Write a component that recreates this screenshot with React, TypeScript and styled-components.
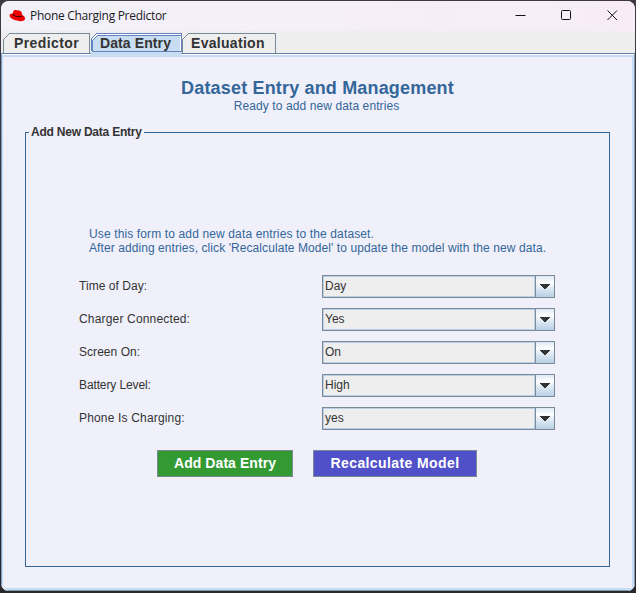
import React from "react";
import styled, { createGlobalStyle } from "styled-components";

const GlobalStyle = createGlobalStyle`
  * { box-sizing: border-box; }
  body { margin: 0; background: #29292d; }
`;

const Frame = styled.div`
  width: 636px;
  height: 593px;
  padding: 1px 1px 2px;
  background: linear-gradient(#3d3a42, #29292d);
  overflow: hidden;
`;

const Window = styled.div`
  display: flex;
  flex-direction: column;
  height: 590px;
  border-radius: 8px;
  overflow: hidden;
  background: #eeeeee;
  color: #333333;
  font: 12px/14px "Liberation Sans", Arial, sans-serif;
`;

const TitleBar = styled.header`
  display: flex;
  align-items: center;
  flex: none;
  height: 30px;
  padding-left: 8px;
  background: linear-gradient(90deg, #f2f1fa, #f8edf6);
`;

const WindowTitle = styled.span`
  flex: 1;
  margin-left: 4px;
  color: #1b1a1c;
  font: 12px/16px "Open Sans", "Noto Sans", sans-serif;
  letter-spacing: -0.29px;
`;

const WindowButton = styled.button`
  display: flex;
  align-items: center;
  justify-content: center;
  width: 46px;
  height: 30px;
  padding: 0 0 2px;
  border: 0;
  background: none;
`;

const TabBar = styled.nav`
  display: flex;
  flex: none;
  height: 22px;
  padding: 2px 0 0 2px;
  background: #eeeeee;
`;

const Tab = styled.button<{ $width: number; $tracking: number }>`
  position: relative;
  flex: none;
  width: ${(p) => p.$width}px;
  height: 20px;
  padding: 0;
  border: 0;
  background: none;
  color: #333333;
  font: bold 14px/20px "Liberation Sans", Arial, sans-serif;
  letter-spacing: ${(p) => p.$tracking}px;
  white-space: nowrap;
`;

const TabShape = styled.svg`
  position: absolute;
  left: 0;
  top: 0;
`;

const TabLabel = styled.span<{ $inset: number }>`
  position: absolute;
  left: ${(p) => p.$inset}px;
  top: 0;
`;

const TabPane = styled.main`
  position: relative;
  flex: 1;
  display: flex;
  flex-direction: column;
  border: solid;
  border-width: 1px;
  border-color: #6382a8 #7a99b2 #7a99b2 #7f9ccc;
  background: #f0f0fa;
  box-shadow: inset 0 1px #ffffff, inset 0 3px #c8ddf2, inset 1px 0 #c8ddf2, inset -2px 0 #c8ddf2,
    inset 0 -2px #c8ddf2;
  padding: 24px 24px 0 23px;
`;

const TabJoin = styled.div`
  position: absolute;
  left: 89px;
  top: -2px;
  width: 90px;
  height: 4px;
  background: #c8ddf2;
`;

const Heading = styled.h1`
  margin: 0;
  color: #336699;
  font: bold 18px/20px "Liberation Sans", Arial, sans-serif;
  letter-spacing: 0.17px;
  text-align: center;
`;

const Status = styled.p`
  margin: 1px 0 0;
  padding-right: 2px;
  color: #336699;
  letter-spacing: 0.1px;
  text-align: center;
`;

const Group = styled.fieldset`
  min-width: 0;
  width: 585px;
  height: 442px;
  margin: 12px 0 0;
  padding: 88px 53px 0;
  border: 1px solid #336699;
`;

const Legend = styled.legend`
  height: 14px;
  margin-left: -50px;
  padding: 0 2px;
  font: bold 12px/14px "Liberation Sans", Arial, sans-serif;
  letter-spacing: -0.22px;
`;

const Instructions = styled.div`
  padding-left: 10px;
  color: #336699;
`;

const Line = styled.p<{ $tracking: number }>`
  margin: 0;
  letter-spacing: ${(p) => p.$tracking}px;
  white-space: nowrap;
`;

const Form = styled.div`
  display: grid;
  gap: 10px;
  margin-top: 20px;
`;

const Row = styled.div`
  display: grid;
  grid-template-columns: 243px 233px;
  height: 23px;
`;

const Label = styled.label<{ $tracking: number }>`
  line-height: 22px;
  letter-spacing: ${(p) => p.$tracking}px;
`;

const Combo = styled.div`
  display: grid;
  grid-template-columns: 1fr 19px;
  border: 1px solid #7a8a99;
`;

const ComboValue = styled.span`
  padding-left: 1px;
  border: 1px solid #b8cfe5;
  background: #eeeeee;
  line-height: 18px;
`;

const ComboArrow = styled.span`
  display: flex;
  align-items: center;
  padding-left: 4px;
  border-left: 1px solid #7a8a99;
  background: linear-gradient(#dde8f3, #ffffff 30%, #dce8f3 60%, #b8cfe5);
`;

const Actions = styled.div`
  display: flex;
  gap: 20px;
  margin: 20px 0 0 78px;
`;

const ActionButton = styled.button<{ $width: number; $color: string; $tracking: number }>`
  width: ${(p) => p.$width}px;
  height: 27px;
  padding: 0;
  border: 1px solid #7a8a99;
  background: ${(p) => p.$color};
  color: #ffffff;
  font: bold 14px/25px "Liberation Sans", Arial, sans-serif;
  letter-spacing: ${(p) => p.$tracking}px;
  white-space: nowrap;
`;

const fields = [
  { label: "Time of Day:", value: "Day", tracking: 0.05 },
  { label: "Charger Connected:", value: "Yes", tracking: 0.17 },
  { label: "Screen On:", value: "On", tracking: 0.05 },
  { label: "Battery Level:", value: "High", tracking: -0.12 },
  { label: "Phone Is Charging:", value: "yes", tracking: 0.17 },
];

const tabs = [
  { label: "Predictor", width: 88, inset: 11, tracking: 0.4 },
  { label: "Data Entry", width: 91, inset: 9, tracking: 0.1 },
  { label: "Evaluation", width: 95, inset: 9, tracking: 0.3 },
];

function HatIcon() {
  return (
    <svg width="17" height="14" viewBox="0 0 17 14">
      <path d="M4.5 2C5.2.6 7 .9 8.2 1.4C10 1 12.3 1.8 12.8 4L13.2 6C15 7 16.6 8.6 15.9 10.2C15 12.3 11 12.7 8 11.6C4.8 10.9 1 9.1.5 6.7C.4 5.1 2 4.6 3.6 4.8Z" fill="#ee0000" />
      <path d="M3.7 4.2C5 6.5 10 8.7 13.1 6.4L13.2 7.2C10.3 9.6 4.3 7.6 3.6 5.1Z" fill="#170606" />
    </svg>
  );
}

function TabOutline({ width, selected }: { width: number; selected: boolean }) {
  const edge = width - 0.5;
  return selected ? (
    <TabShape width={width} height="21" shapeRendering="crispEdges">
      <path d={`M0 20V6L6 0H${width}V20Z`} fill="#ffffff" />
      <path d={`M2 18V7L7 2H${width - 2}V18Z`} fill="#c8ddf2" />
      <path d={`M.5 18V5.5L5.5 .5H${edge}V19M.5 18.5H${edge}M${edge} 2.5H6.5L1.5 7.5V18`} fill="none" stroke="#6382bf" />
    </TabShape>
  ) : (
    <TabShape width={width} height="21" shapeRendering="crispEdges">
      <path d={`M.5 20V6.5L6.5 .5H${width - 1.5}V20`} fill="#eeeeee" stroke="#7a8a99" />
    </TabShape>
  );
}

export default function App() {
  return (
    <>
      <GlobalStyle />
      <Frame>
        <Window>
          <TitleBar>
            <HatIcon />
            <WindowTitle>Phone Charging Predictor</WindowTitle>
            <WindowButton aria-label="Minimize">
              <svg width="11" height="11"><path d="M.5 5.5H10.5" stroke="#111" /></svg>
            </WindowButton>
            <WindowButton aria-label="Maximize">
              <svg width="11" height="11"><rect x=".5" y=".5" width="9" height="9" rx="1" fill="none" stroke="#111" /></svg>
            </WindowButton>
            <WindowButton aria-label="Close">
              <svg width="11" height="11"><path d="M.5 .5L10 10M10 .5L.5 10" stroke="#111" /></svg>
            </WindowButton>
          </TitleBar>
          <TabBar>
            {tabs.map((tab, i) => (
              <Tab key={tab.label} $width={tab.width} $tracking={tab.tracking}>
                <TabOutline width={tab.width} selected={i === 1} />
                <TabLabel $inset={tab.inset}>{tab.label}</TabLabel>
              </Tab>
            ))}
          </TabBar>
          <TabPane>
            <TabJoin />
            <Heading>Dataset Entry and Management</Heading>
            <Status>Ready to add new data entries</Status>
            <Group>
              <Legend>Add New Data Entry</Legend>
              <Instructions>
                <Line $tracking={0.13}>Use this form to add new data entries to the dataset.</Line>
                <Line $tracking={0.08}>After adding entries, click 'Recalculate Model' to update the model with the new data.</Line>
              </Instructions>
              <Form>
                {fields.map((field) => (
                  <Row key={field.label}>
                    <Label $tracking={field.tracking}>{field.label}</Label>
                    <Combo>
                      <ComboValue>{field.value}</ComboValue>
                      <ComboArrow>
                        <svg width="10" height="5" shapeRendering="crispEdges">
                          <path d="M0 0H10V1H9V2H8V3H7V4H6V5H4V4H3V3H2V2H1V1H0Z" fill="#333333" />
                        </svg>
                      </ComboArrow>
                    </Combo>
                  </Row>
                ))}
              </Form>
              <Actions>
                <ActionButton $width={136} $color="#339933" $tracking={0.06}>Add Data Entry</ActionButton>
                <ActionButton $width={164} $color="#5050c8" $tracking={0.4}>Recalculate Model</ActionButton>
              </Actions>
            </Group>
          </TabPane>
        </Window>
      </Frame>
    </>
  );
}
